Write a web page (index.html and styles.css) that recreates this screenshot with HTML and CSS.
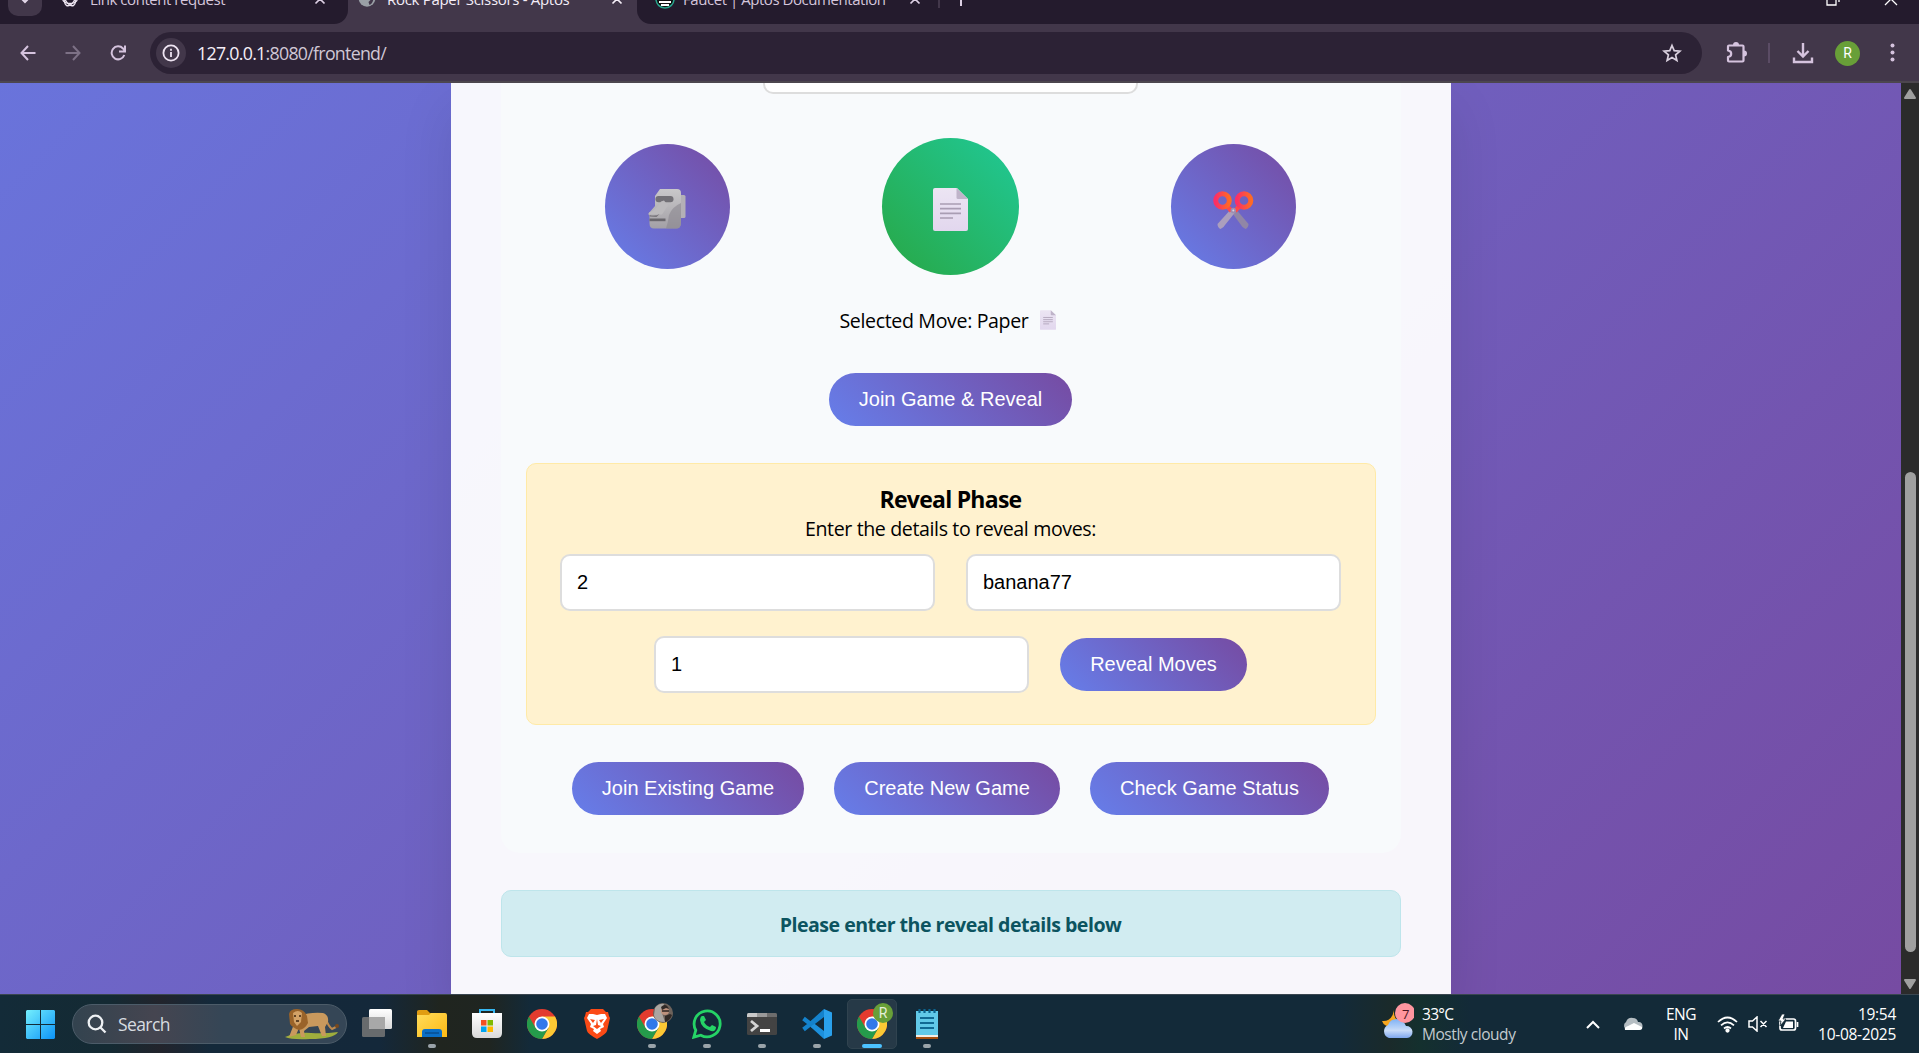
FILE: index.html
```html
<!DOCTYPE html>
<html lang="en">
<head>
<meta charset="utf-8">
<title>Rock Paper Scissors - Aptos</title>
<link rel="stylesheet" href="styles.css">
</head>
<body>
<svg class="defs" width="0" height="0">
  <defs>
    <linearGradient id="g-paper" x1="0" y1="0" x2="0" y2="1"><stop offset="0" stop-color="#ece5f3"/><stop offset="1" stop-color="#e2d7ee"/></linearGradient>
    <linearGradient id="g-stone" x1="0" y1="0" x2="0" y2="1"><stop offset="0" stop-color="#c9c8ca"/><stop offset="1" stop-color="#a3a0a6"/></linearGradient>
    <linearGradient id="g-handle" x1="0" y1="0" x2="1" y2="0"><stop offset="0" stop-color="#fb2f66"/><stop offset="1" stop-color="#ff6a24"/></linearGradient>
    <linearGradient id="g-win" x1="0" y1="0" x2="1" y2="1"><stop offset="0" stop-color="#74effd"/><stop offset="1" stop-color="#0c93f7"/></linearGradient>
    <linearGradient id="g-folder" x1="0" y1="0" x2="1" y2="1"><stop offset="0" stop-color="#ffdc5c"/><stop offset="1" stop-color="#fdb913"/></linearGradient>
    <linearGradient id="g-white" x1="0" y1="0" x2="0" y2="1"><stop offset="0" stop-color="#ffffff"/><stop offset="1" stop-color="#d9d9d9"/></linearGradient>
    <linearGradient id="g-cloud" x1="0" y1="0" x2="0" y2="1"><stop offset="0" stop-color="#7fb2f5"/><stop offset=".6" stop-color="#c9dcf8"/><stop offset="1" stop-color="#7ea7ee"/></linearGradient>
    <symbol id="paper" viewBox="0 0 35 43">
      <path d="M2 0h22l11 11v30a2 2 0 0 1-2 2H2a2 2 0 0 1-2-2V2a2 2 0 0 1 2-2z" fill="url(#g-paper)"/>
      <path d="M23.500 0L35 11H25a1.500 1.500 0 0 1-1.500-1.500z" fill="#bfb4c9"/>
      <path d="M7 16h21M7 20.700h21M7 25.300h21M7 30h13" stroke="#a99db3" stroke-width="1.700"/>
    </symbol>
    <symbol id="chrome" viewBox="0 0 30 30">
      <circle cx="15" cy="15" r="15" fill="#e33b2e"/>
      <path d="M15 7.500h13A15 15 0 0 1 15 30l6.500-11.200z" fill="#fcc934"/>
      <path d="M2 7.500A15 15 0 0 0 15 30l6.500-11.200L8.500 18.800z" fill="#259b4b"/>
      <circle cx="15" cy="15" r="7.500" fill="#fff"/>
      <circle cx="15" cy="15" r="5.800" fill="#3178ea"/>
    </symbol>
  </defs>
</svg>

<header class="browser">
  <div class="tabstrip">
    <div class="tabsearch"><svg width="10" height="8"><path d="M1 1l4 4 4-4" fill="none" stroke="#e4d8ea" stroke-width="2"/></svg></div>
    <div class="tab tab-first">
      <svg class="fav" width="16" height="16" viewBox="0 0 16 16" fill="none" stroke="#eee6f2" stroke-width="1.300"><ellipse cx="8" cy="8" rx="7.300" ry="4.500"/><ellipse cx="8" cy="8" rx="7.300" ry="4.500" transform="rotate(60 8 8)"/><ellipse cx="8" cy="8" rx="7.300" ry="4.500" transform="rotate(120 8 8)"/></svg>
      <span class="t1">Link content request</span>
      <svg class="x" width="12" height="12"><path d="M1.500 1.500l9 9M10.500 1.500l-9 9" stroke="#ddd0e4" stroke-width="1.700"/></svg>
    </div>
    <div class="tab tab-active">
      <svg class="fav" width="18" height="16" viewBox="0 0 18 16"><circle cx="9" cy="7.500" r="8.300" fill="#9aa0a6"/><path d="M9 0q7 1 6.500 8-1 5-4 6l-1-3 2-2-2-2H8V0z" fill="#42374a"/></svg>
      <span class="t2">Rock Paper Scissors - Aptos</span>
      <svg class="x" width="12" height="12"><path d="M1.500 1.500l9 9M10.500 1.500l-9 9" stroke="#f5eef8" stroke-width="1.700"/></svg>
    </div>
    <div class="tab tab-last">
      <svg class="fav" width="20" height="18" viewBox="0 0 20 18"><circle cx="10" cy="8" r="9" fill="#111" stroke="#27a58c" stroke-width="1.500"/><path d="M3 7h6l1 1h7M4 11h12M6 14h8" stroke="#fff" stroke-width="2"/></svg>
      <span class="t3">Faucet | Aptos Documentation</span>
      <svg class="x" width="12" height="12"><path d="M1.500 1.500l9 9M10.500 1.500l-9 9" stroke="#ddd0e4" stroke-width="1.700"/></svg>
    </div>
    <i class="tabsep"></i>
    <svg class="plus" width="14" height="14"><path d="M7 0v14M0 7h14" stroke="#ddd0e4" stroke-width="2"/></svg>
    <svg class="restore" width="14" height="14" fill="none" stroke="#fff" stroke-width="1.300"><path d="M1 4h9v9H1zM4 1h9v9"/></svg>
    <svg class="close" width="14" height="14"><path d="M1 1l12 12M13 1L1 13" stroke="#fff" stroke-width="1.300"/></svg>
  </div>
  <div class="toolbar">
    <svg class="nav" width="16" height="16" fill="none" stroke="#d5c3de" stroke-width="2"><path d="M15.500 8H1.500M8 1L1.500 8 8 15"/></svg>
    <svg class="nav" width="16" height="16" fill="none" stroke="#7d7186" stroke-width="2"><path d="M.5 8h14M8 1l6.500 7L8 15"/></svg>
    <svg class="nav" width="16" height="16" fill="none" stroke="#d5c3de" stroke-width="2"><path d="M14.300 10A6.500 6.500 0 1 1 13 3.500l1.500 2M15 .5v6H9"/></svg>
    <div class="omnibox">
      <span class="info"><svg width="18" height="18"><circle cx="9" cy="9" r="7.600" fill="none" stroke="#eee4f2" stroke-width="1.800"/><path d="M9 8v5M9 4.700v2" stroke="#eee4f2" stroke-width="1.800"/></svg></span>
      <span class="url">127.0.0.1<em>:8080/frontend/</em></span>
      <svg class="star" width="20" height="20" viewBox="0 0 20 20"><path d="M10 2.500l2.200 5.200 5.700.5-4.300 3.700 1.300 5.600-4.900-3-4.900 3 1.300-5.600-4.300-3.700 5.700-.5z" fill="none" stroke="#d9d0de" stroke-width="1.700"/></svg>
    </div>
    <svg class="puzzle" width="22" height="22" viewBox="0 0 22 22"><path d="M3 3.500h13.500q1 0 1 1v14q0 1-1 1H3q-1 0-1-1V15q3.200-.5 3.200-3.300T2 8.500v-4q0-1 1-1z" fill="none" stroke="#d5c3de" stroke-width="2.200" stroke-linejoin="round"/><path d="M7 3a3 3 0 0 1 6 0zM18 8.500a3 3 0 0 1 0 6z" fill="#d5c3de"/></svg>
    <i class="toolsep"></i>
    <svg class="download" width="22" height="22" fill="none" stroke="#d5c3de" stroke-width="2.400"><path d="M11 1v13M5.500 9l5.500 5.500L16.500 9M2 15.500V20h18v-4.500"/></svg>
    <span class="avatar">R</span>
    <svg class="dots" width="5" height="20" fill="#d5c3de"><circle cx="2.500" cy="2.500" r="2"/><circle cx="2.500" cy="9.500" r="2"/><circle cx="2.500" cy="16.500" r="2"/></svg>
  </div>
</header>

<div class="viewport">
  <main class="page">
    <div class="container">
      <section class="game">
        <div class="field-top"></div>
        <div class="moves">
          <div class="move rock"><svg width="41" height="41" viewBox="0 0 41 41">
            <rect x="33" y="6" width="6.500" height="23" rx="1.500" fill="#b3b0b6"/>
            <path d="M14 0h17q4 0 4 4v30q0 5.500-5 5.500H8q-4.500 0-4.500-5V28l-1-3.500L9 17V7z" fill="url(#g-stone)"/>
            <path d="M35 14q-9 4-12 12-1 8-3 13.500h10q5 0 5-5.500z" fill="#8a878f" opacity=".6"/>
            <rect x="9.500" y="7" width="18" height="6.300" rx="3" fill="#727076"/>
            <path d="M15 12.500l3-1 4 5-6 9H2.500L3 23.500q8-3 12-11z" fill="#bcbabd"/>
            <path d="M3.500 26q6 1.500 10-1l-3 3-7-.5z" fill="#77747a"/>
            <rect x="3.500" y="29.500" width="16" height="2.700" fill="#69666c"/>
          </svg></div>
          <div class="move selected"><svg width="35" height="43"><use href="#paper"/></svg></div>
          <div class="move"><svg width="41" height="38" viewBox="0 0 41 38">
            <path d="M17 19l5-2 13.500 16q0 3.500-3 5-3.500-1.500-4.500-4z" fill="#9186a6"/><path d="M24 19l-5-2L4.500 33q0 3.500 3 5 3.500-1.500 4.500-4z" fill="#ab9fbd"/>
            <path d="M14 15l4.500 5M26.500 15L22 20" stroke="#fd4a48" stroke-width="4.500"/>
            <g fill="none" stroke="url(#g-handle)" stroke-width="5"><circle cx="9.500" cy="9.500" r="6.800"/><circle cx="31" cy="9.500" r="6.800"/></g>
            <circle cx="20.300" cy="19.500" r="2.700" fill="#9b8fb0"/><circle cx="20.300" cy="19.500" r="1" fill="#d8cfe0"/>
          </svg></div>
        </div>
        <p class="selection"><span>Selected Move: Paper</span><svg width="16" height="20"><use href="#paper"/></svg></p>
        <div class="row join"><button class="btn w-join">Join Game &amp; Reveal</button></div>
        <div class="reveal">
          <h3><span>Reveal Phase</span></h3>
          <p class="hint">Enter the details to reveal moves:</p>
          <div class="fields">
            <div class="input">2</div>
            <div class="input">banana77</div>
          </div>
          <div class="fields second">
            <div class="input">1</div>
            <button class="btn w-reveal">Reveal Moves</button>
          </div>
        </div>
        <div class="row actions">
          <button class="btn w-exist">Join Existing Game</button>
          <button class="btn w-create">Create New Game</button>
          <button class="btn w-check">Check Game Status</button>
        </div>
      </section>
      <div class="status"><span>Please enter the reveal details below</span></div>
    </div>
  </main>
  <aside class="scrollbar">
    <svg width="14" height="12"><path d="M7 2l5 8H2z" fill="#9f9f9f" stroke="#9f9f9f" stroke-width="2" stroke-linejoin="round"/></svg>
    <div class="thumb"></div>
    <svg width="14" height="12"><path d="M7 10l5-8H2z" fill="#9f9f9f" stroke="#9f9f9f" stroke-width="2" stroke-linejoin="round"/></svg>
  </aside>
</div>

<footer class="taskbar">
  <svg class="start" width="29" height="29" viewBox="0 0 29 29"><path d="M1 0h13v14H0V1zM15 0h13l1 1v13H15zM0 15h14v14H1l-1-1zM15 15h14v13l-1 1H15z" fill="url(#g-win)"/></svg>
  <div class="search">
    <svg width="20" height="20" fill="none" stroke="#eef1f4" stroke-width="2.300"><circle cx="8.500" cy="8.500" r="6.800"/><path d="M13.500 13.500l5 5"/></svg>
    <span class="search-label">Search</span>
    <svg class="lion" width="55" height="32" viewBox="0 0 55 32">
      <path d="M1 29q13-5 26-4t27-1q-4 7-28 7Q8 32 1 29z" fill="#9fae3d"/>
      <path d="M41 10q4 9 7 11l4-2" fill="none" stroke="#bd8a4e" stroke-width="2"/><circle cx="53" cy="18" r="2" fill="#78491d"/>
      <path d="M16 8q9-4 23-3 6 2 5 9l-3 5 1 9h-4l-4-10-9 1-5 4 1 6h-4l-2-9-3 7-7 2 5-13z" fill="#c9995d"/>
      <path d="M5 6q1-5 8-5t10 7l1 7q-3 6-9 7-6-2-9-6z" fill="#9a6329"/>
      <path d="M9 5q5-4 9 0l-1 9-4 4-3-4z" fill="#d3a267"/><path d="M10 8h2M15 8h2M12 13h3" stroke="#3c2411" stroke-width="1.300"/>
    </svg>
  </div>
  <nav class="apps">
    <div class="app"><svg width="30" height="29"><rect y="8" width="23" height="20" rx="1.500" fill="#777" opacity=".85"/><rect x="7" width="23" height="20" rx="1.500" fill="url(#g-white)"/><path d="M7 8h16v12H8.500L7 19z" fill="#a8a8a8"/></svg></div>
    <div class="app open"><svg width="30" height="28"><path d="M0 1.500Q0 0 2 0h8l3 3h14q2 0 2 2v5H0z" fill="#e09c12"/><path d="M0 5h12l2-2h14q2 0 2 2v22H0z" fill="url(#g-folder)"/><path d="M5 27v-5q0-3 3-3h14q3 0 3 3v5z" fill="#0b6fc7"/><path d="M8 23h14" stroke="#073f76" stroke-width="1"/></svg></div>
    <div class="app"><svg width="30" height="29"><path d="M8 5V1h14v4" fill="none" stroke="#36b7f1" stroke-width="2"/><path d="M0 4h30v20q0 5-5 5H5q-5 0-5-5z" fill="url(#g-white)"/><path d="M9 11h5.500v5.500H9z" fill="#f25022"/><path d="M15.500 11H21v5.500h-5.500z" fill="#7fba00"/><path d="M9 17.500h5.500V23H9z" fill="#00a4ef"/><path d="M15.500 17.500H21V23h-5.500z" fill="#ffb900"/></svg></div>
    <div class="app"><svg width="30" height="30"><use href="#chrome"/></svg></div>
    <div class="app"><svg width="26" height="30" viewBox="0 0 26 30"><path d="M7 0h12l3 3 2 0 1 4 1 2-3 13q-1 3-10 8Q4 25 3 22L0 9l1-2 1-4h2z" fill="#fb4a16"/><path d="M5 5l4 0 4 1 4-1 4 0 2 4-4 6 1 3-4 2 1 2-4 3-4-3 1-2-4-2 1-3-4-6z" fill="#fff"/><path d="M6 10l5 1-2 3zM20 10l-5 1 2 3zM13 10l1 6 3 1-4 3-4-3 3-1z" fill="#fb4a16"/></svg></div>
    <div class="app open"><svg width="30" height="30"><use href="#chrome"/></svg>
      <svg class="badge" width="20" height="20"><circle cx="10" cy="10" r="10" fill="#6d625b"/><path d="M2 5q4-5 9-4l-2 9 3 9Q2 19 1 12z" fill="#aaa6a2"/><circle cx="12" cy="8" r="4" fill="#bd917c"/><path d="M8 4q5-5 8 2l-3-1-4 2zM12 13l5-2 2 1q-2 6-7 7z" fill="#302926"/><path d="M9 8h7" stroke="#171414" stroke-width="1.300"/></svg></div>
    <div class="app open"><svg width="30" height="30" viewBox="0 0 30 30"><path d="M1.800 28.200l2-7a13 13 0 1 1 5 5z" fill="none" stroke="#25d366" stroke-width="2.800"/><path d="M10 7l2 0 2 4-2 2q2 4 6 5l2-2 4 2q0 5-5 4Q9 19 8 11q0-3 2-4z" fill="#25d366"/></svg></div>
    <div class="app open"><svg class="terminal" width="30" height="22"><rect width="30" height="22" rx="1.500" fill="#434343"/><path d="M0 4V1.500Q0 0 1.500 0H10v4z" fill="#c9c9c9"/><path d="M10 0h10v4H10z" fill="#999"/><path d="M20 0h8.500Q30 0 30 1.500V4H20z" fill="#6d6d6d"/><path d="M4 8l6 5-6 5" fill="none" stroke="#d4d4d4" stroke-width="2.800"/><path d="M13 17.500h10" stroke="#fff" stroke-width="3"/></svg></div>
    <div class="app open"><svg width="30" height="30" viewBox="0 0 30 30"><path d="M1.500 9.500L22 25.500M1.500 20.500L22 4.500" stroke="#1482cc" stroke-width="4.200"/><path d="M22 0l8 3.500v23L22 30z" fill="#2aa1ec"/><path d="M22 0v8l-9.500 7.200-4-3z" fill="#1482cc"/><path d="M22 30v-8L12.500 14.800l-4 3z" fill="#1c90dc"/></svg></div>
    <div class="app open current"><svg width="30" height="30"><use href="#chrome"/></svg><span class="badge letter">R</span></div>
    <div class="app open"><svg width="22" height="30"><path d="M0 2h22v24H0z" fill="#61c9e8"/><path d="M0 26h22v2H0z" fill="#f3eee6"/><path d="M0 28h22v2H0z" fill="#a8500e"/><path d="M3.500 0v4M8.500 0v4M13.500 0v4M18.500 0v4" stroke="#0c6591" stroke-width="2.200"/><path d="M4 9h14M4 14h14M4 19h14" stroke="#116a94" stroke-width="2"/></svg></div>
  </nav>
  <div class="weather">
    <svg width="32" height="38" viewBox="0 0 32 38"><path d="M12 7q-1 10 8 13l-5 3Q3 26 0 18q10 1 12-11z" fill="#f8a61d"/><path d="M7 35a7 7 0 0 1-1-13Q8 16 15 16q6 0 9 7a6 6 0 0 1 1 12z" fill="url(#g-cloud)"/><circle cx="23" cy="10" r="10" fill="#ff969f"/></svg>
    <span class="count">7</span>
    <div class="two"><span>33°C</span><span class="dim">Mostly cloudy</span></div>
  </div>
  <svg class="chev" width="14" height="9"><path d="M1 8l6-6 6 6" fill="none" stroke="#fff" stroke-width="2"/></svg>
  <svg class="cloud" width="21" height="14"><path d="M5 13a4.500 4.500 0 0 1-1-8Q6 0 11 1q4 0 5 4a4 4 0 0 1 1 8z" fill="#b5bdc2"/><path d="M3 13q-1-3 3-4l6-3q4 2 8 4 1 3-3 3z" fill="#fff"/></svg>
  <div class="two lang"><span>ENG</span><span>IN</span></div>
  <svg class="wifi" width="21" height="17" fill="none" stroke="#fff" stroke-width="1.700"><path d="M1 6q9.500-9 19 0M4 9.300q6.500-6 13 0M7 12.500q3.500-3 7 0"/><circle cx="10.500" cy="14.500" r="1.300" fill="#fff"/></svg>
  <svg class="vol" width="20" height="16" fill="none" stroke="#fff" stroke-width="1.500"><path d="M1 5h3.500L9 1v14l-4.500-4H1zM12.500 5l6 6M18.500 5l-6 6"/></svg>
  <svg class="bat" width="21" height="18" fill="none" stroke="#fff" stroke-width="1.700"><rect x="2" y="5" width="15.500" height="11" rx="2"/><path d="M19.500 8v5"/><path d="M8 7.500h7V14H5z" fill="#fff" stroke="none"/><path d="M4 0L0 7h3l-1 5 6-7H5l2-5z" fill="#fff" stroke="#142936" stroke-width=".8"/></svg>
  <div class="two clock"><span>19:54</span><span>10-08-2025</span></div>
</footer>
</body>
</html>
```
FILE: styles.css
```css
* { box-sizing: border-box; }
body {
  margin: 0; width: 1919px; height: 1053px; overflow: hidden;
  display: flex; flex-direction: column;
  font-family: "Open Sans", "Noto Sans", sans-serif; color: #000;
}
svg { display: block; flex: none; }
.defs { position: absolute; }
p, h3 { margin: 0; }
span { white-space: nowrap; }

/* Browser chrome */
.browser { height: 83px; flex: none; background: #42374a; border-bottom: 2px solid #4c464e; }
.tabstrip { height: 24px; background: linear-gradient(90deg, #241b2d 0 300px, #42374a 300px 660px, #241b2d 660px); display: flex; align-items: flex-start; color: #d5c6dc; font-size: 15px; line-height: 20px; }
.tabstrip > * { flex: none; }
.tabsearch { width: 34px; height: 16px; margin-left: 8px; background: #42374a; border-radius: 0 0 10px 10px; display: flex; justify-content: center; }
.tabsearch svg { margin-top: -3px; }
.tab { height: 24px; display: flex; align-items: flex-start; }
.tab span { margin-top: -11px; }
.tab .fav { margin-top: -9px; }
.tab .x { margin-top: -7px; margin-left: auto; }
.tab-first { width: 306px; padding: 0 22px 0 20px; background: #241b2d; border-bottom-right-radius: 14px; }
.tab-first .fav { margin-right: 12px; }
.tab-active { width: 289px; padding: 0 14px 0 10px; background: #42374a; color: #f4edf7; }
.tab-active .fav { margin-right: 11px; }
.tab-last { width: 300px; background: #241b2d; padding: 0 16px 0 18px; border-bottom-left-radius: 14px; }
.tab-last .fav { margin-right: 8px; }
.t1 { letter-spacing: -.45px; }
.t2 { letter-spacing: -.31px; }
.t3 { letter-spacing: -.45px; }
.tabsep { width: 2px; height: 8px; margin-left: 1px; background: #42374a; }
.plus { margin: -8px 0 0 14px; }
.restore { margin: -8px 0 0 858px; }
.close { margin: -8px 0 0 44px; }
.toolbar { height: 57px; padding: 8px 25px 7px 20px; display: flex; align-items: center; }
.toolbar > * { flex: none; }
.nav { margin: -1px 29px 0 0; }
.nav:nth-child(3) { margin-right: 24px; }
.omnibox { width: 1552px; height: 42px; border-radius: 21px; background: #2c2235; display: flex; align-items: center; padding: 0 20px 0 6px; }
.info { width: 30px; height: 30px; border-radius: 50%; background: #42374a; display: flex; align-items: center; justify-content: center; }
.url { margin-left: 11px; font-size: 17.800px; letter-spacing: -.72px; color: #f5eff7; }
.url em { font-style: normal; color: #d0c7d5; }
.star { margin-left: auto; }
.puzzle { margin-left: 24px; }
.toolsep { width: 2px; height: 20px; margin-left: 20px; background: #5b4c65; }
.download { margin-left: 22px; }
.avatar { width: 25px; height: 25px; margin-left: 21px; border-radius: 50%; background: #689f38; color: #fff; font: 14px/25px Roboto, sans-serif; text-align: center; }
.dots { margin-left: 30px; }

/* Game page */
.viewport { height: 911px; flex: none; display: flex; }
.page { width: 1901px; overflow: hidden; display: flex; justify-content: center; background: linear-gradient(135deg, #667eea -26%, #764ba2 100%); }
.container { width: 1000px; padding: 0 50px; background: rgba(255, 255, 255, .95); box-shadow: 0 25px 50px rgba(0, 0, 0, .1); }
.game { height: 770px; padding: 0 25px; background: #f8fafc; border-radius: 0 0 19px 19px; }
.field-top { width: 375px; height: 11px; margin: 0 auto; background: #fff; border: 2px solid #ddd; border-top: 0; border-radius: 0 0 10px 10px; }
.moves { height: 125px; margin-top: 50px; display: flex; justify-content: space-around; align-items: center; }
.move { width: 125px; height: 125px; border-radius: 50%; background: linear-gradient(45deg, #667eea, #764ba2); display: flex; align-items: center; justify-content: center; padding-top: 6px; }
.rock { padding-right: 2px; }
.move.selected { width: 137px; height: 137px; margin: 0 -6px; background: linear-gradient(45deg, #28a745, #20c997); }
.selection { height: 30px; margin-top: 36px; display: flex; justify-content: center; align-items: center; font-size: 19.600px; letter-spacing: -.36px; }
.selection svg { margin: 0 6px 0 11px; }
.row { display: flex; justify-content: center; gap: 30px; margin-top: 37px; }
.row.join { margin-top: 38px; }
.btn { flex: none; height: 53px; border: 0; border-radius: 27px; padding: 0; background: linear-gradient(45deg, #667eea, #764ba2); color: #fff; font: 20px "Liberation Sans", Arial, sans-serif; white-space: nowrap; }
.w-join { width: 243px; }
.w-reveal { width: 187px; }
.w-exist { width: 232px; }
.w-create { width: 226px; }
.w-check { width: 239px; }
.reveal { height: 262px; margin-top: 37px; padding: 23px 32px 0; border: 1px solid #ffeaa7; border-radius: 10px; background: #fff2cf; text-align: center; }
.reveal h3 { font-size: 23px; line-height: 24px; height: 27px; letter-spacing: -.75px; }
.hint { font-size: 19.600px; line-height: 30px; letter-spacing: -.38px; }
.fields { display: flex; justify-content: center; align-items: center; gap: 31px; margin-top: 10px; }
.fields.second { margin-top: 25px; }
.input { width: 375px; height: 57px; flex: none; background: #fff; border: 2px solid #ddd; border-radius: 10px; padding: 0 15px; text-align: left; font: 20px/52px "Liberation Sans", Arial, sans-serif; }
.status { height: 67px; margin-top: 37px; border: 1px solid #bee5eb; border-radius: 10px; background: #d1ecf1; color: #0c5460; font-size: 19.600px; font-weight: 700; letter-spacing: -.52px; display: flex; justify-content: center; align-items: center; padding-top: 1px; }
.scrollbar { width: 18px; background: #2b2b2b; display: flex; flex-direction: column; align-items: center; padding: 5px 0 4px; }
.thumb { width: 11px; height: 480px; margin: 372px 0 auto; border-radius: 6px; background: #9f9f9f; }

/* Taskbar */
.taskbar { height: 59px; flex: none; display: flex; align-items: center; border-top: 1px solid #3a4650; color: #fff; background: linear-gradient(90deg, #132b38 0, #142a33 110px, #22242c 160px, #14293a 210px, #14283a 380px, #20251f 440px, #1f2521 490px, #132a39 530px, #132a39 1340px, #1a2a2a 1390px, #14302e 1420px, #132a38 1470px); }
.taskbar > * { flex: none; }
.start { margin-left: 26px; margin-top: 1px; }
.search { width: 275px; height: 40px; margin-left: 17px; border-radius: 20px; border: 1px solid #4c5c69; background: linear-gradient(90deg, #33434f, #454550 30%, #354656 55%); display: flex; align-items: center; padding: 0 7px 0 14px; }
.search-label { margin-left: 11px; font-size: 17.500px; letter-spacing: -.6px; color: #d7dce0; }
.lion { margin-left: auto; }
.apps { display: flex; gap: 5px; margin-left: 5px; }
.app { width: 50px; height: 50px; border-radius: 5px; position: relative; display: flex; justify-content: center; align-items: center; }
.app > svg:first-child { margin-top: -1px; }
.app.open::after { content: ""; position: absolute; left: 21px; bottom: 1px; width: 8px; height: 4px; border-radius: 2px; background: #9aa3a9; }
.app.current { background: #263947; border: 1px solid #30434f; }
.app.current::after { left: 14px; bottom: 0; width: 20px; background: #4cc2ff; }
.badge { position: absolute; left: 26px; top: 4px; }
.badge.letter { left: 25px; top: 3px; width: 20px; height: 20px; border-radius: 50%; background: #689f38; color: #e5efd9; font: 14px/20px Roboto, sans-serif; text-align: center; }
.weather { margin-left: 430px; width: 150px; display: flex; align-items: center; position: relative; }
.weather > svg { margin-top: -5px; }
.count { position: absolute; left: 20px; top: 0; font-size: 13px; line-height: 18px; color: #4a1520; }
.two { display: flex; flex-direction: column; margin-top: -1px; font-size: 15.500px; line-height: 20px; letter-spacing: -.7px; }
.weather .two { margin-left: 8px; }
.dim { color: #c3cacf; letter-spacing: -.45px; }
.chev { margin-left: 54px; }
.cloud { margin-left: 22px; }
.lang { width: 40px; margin-left: 18px; align-items: center; letter-spacing: -.5px; }
.wifi { margin-left: 16px; }
.vol { margin-left: 10px; }
.bat { margin-left: 10px; margin-top: -3px; }
.clock { width: 90px; margin-left: 7px; align-items: flex-end; letter-spacing: -.3px; }
```
